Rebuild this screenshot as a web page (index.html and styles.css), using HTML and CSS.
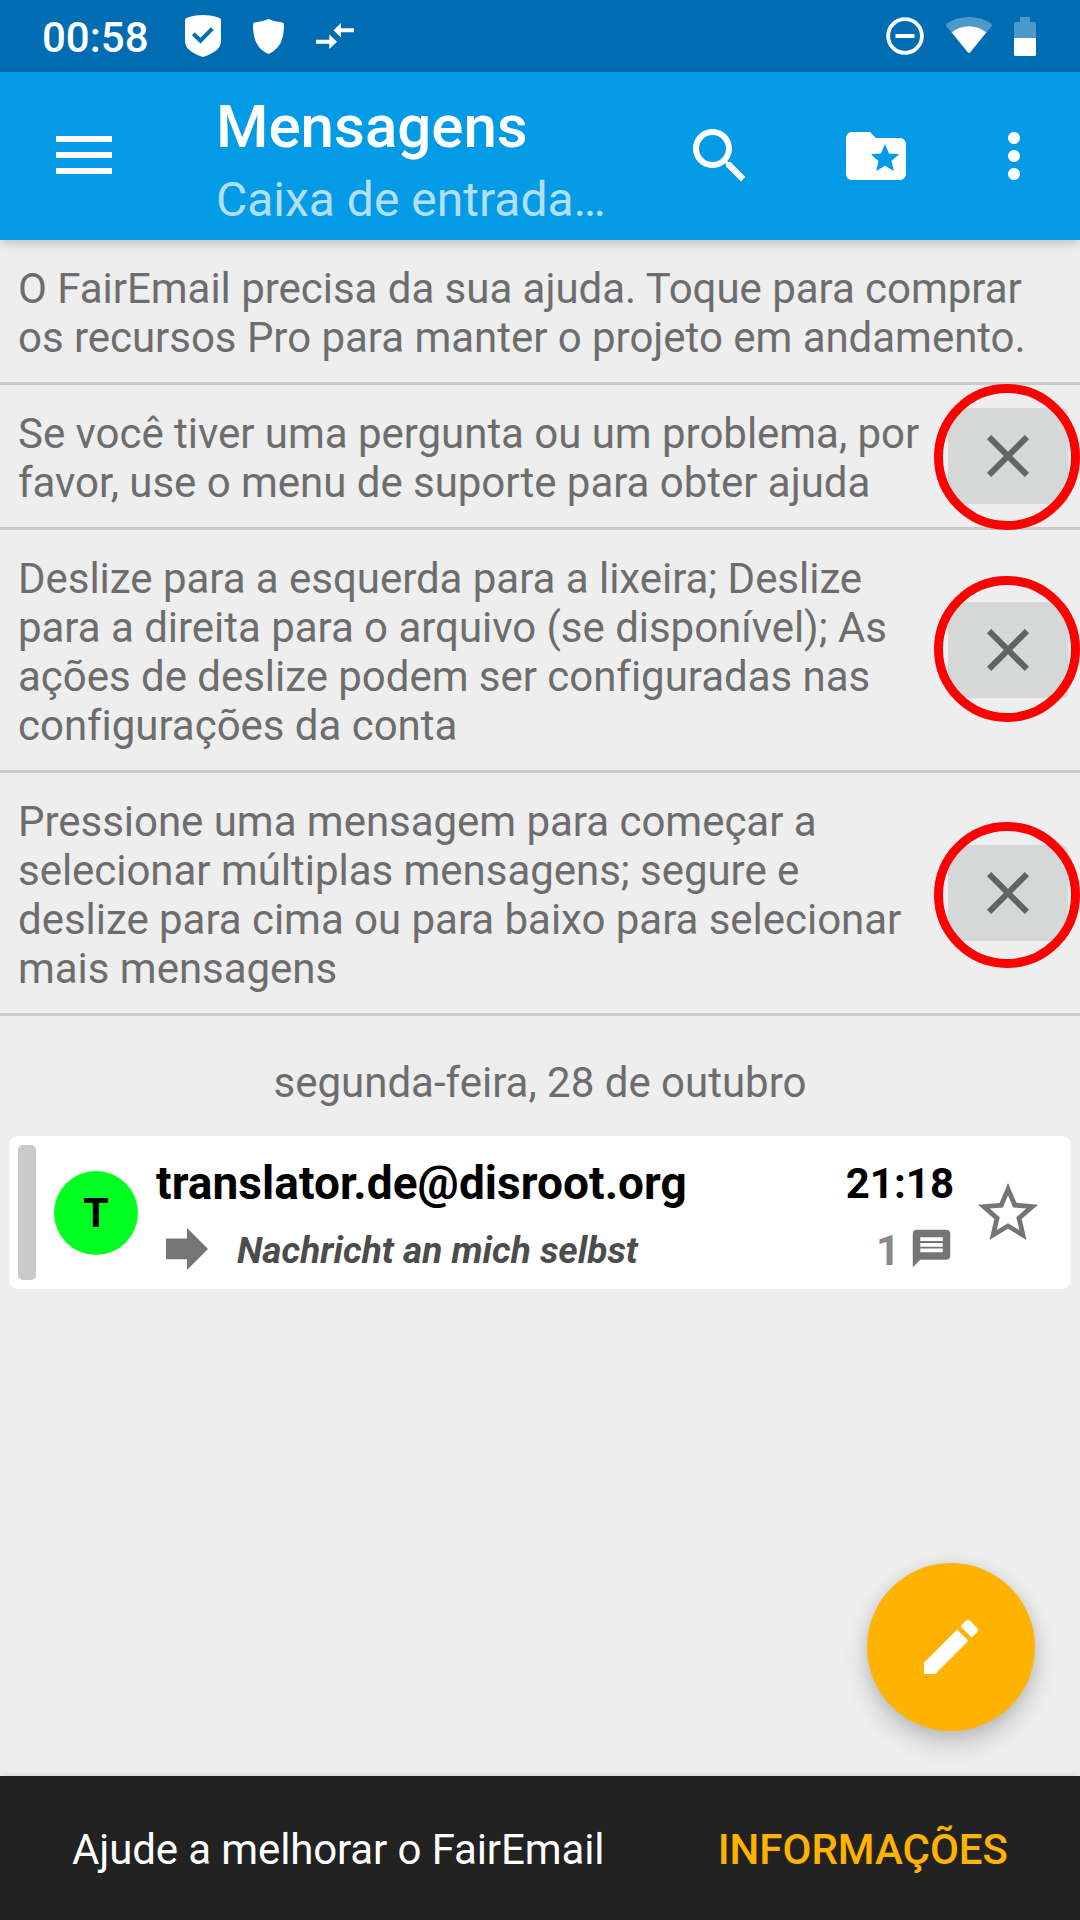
FILE: index.html
```
<!DOCTYPE html>
<html lang="pt">
<head>
<meta charset="utf-8">
<title>Mensagens</title>
<link rel="stylesheet" href="styles.css">
</head>
<body>
<div class="screen">
  <header class="status-bar">
    <span class="clock">00:58</span>
    <svg class="status-shield-check" width="36" height="42" viewBox="0 0 36 42"><path fill="#fff" d="M18 0C12 0 6 1 1.500 3Q0 3.500 0 5V26C0 34 8 38.500 18 42C28 38.500 36 34 36 26V5Q36 3.500 34.500 3C30 1 24 0 18 0Z"/><path fill="none" stroke="#006db3" stroke-width="4" d="M8.300 18.800 15.500 25.700 27.300 13.700"/></svg>
    <svg class="status-shield" width="31" height="35" viewBox="0 0 31 35"><path fill="#fff" d="M15.500 0Q9 3.200 1.500 3.500 0 3.700 0 6C0 20 4 30 15.500 35C27 30 31 20 31 6Q31 3.700 29.500 3.500 22 3.200 15.500 0Z"/></svg>
    <svg class="status-arrows" width="38" height="26" viewBox="0 0 38 26"><path fill="#fff" d="M17.500 7.300 25 0V5.300H38V9.300H25V14.600ZM0 16.800H13.300V11.500L21 18.800 13.300 26V20.800H0Z"/></svg>
    <div class="status-right">
      <svg width="38" height="38" viewBox="0 0 38 38"><circle cx="19" cy="19" r="16.900" fill="none" stroke="#fff" stroke-width="3.800"/><path fill="#fff" d="M9.500 17H28.500V21H9.500Z"/></svg>
      <svg class="wifi" width="46" height="36" viewBox="0 0 46 36"><path fill="#4d99ca" d="M.500 9.500C-.300 8.500 0 7 1.500 6C14-2 32-2 44.500 6C46 7 46.300 8.500 45.500 9.500L40 16H6Z"/><path fill="#fff" d="M5.700 15.500C16 7.300 30 7.300 40.300 15.500L24.500 35Q23 36.800 21.500 35Z"/></svg>
      <svg width="22" height="39" viewBox="0 0 22 39"><path fill="#4d99ca" d="M6 0H16V5H20Q22 5 22 7V21H0V7Q0 5 2 5H6Z"/><path fill="#fff" d="M0 21H22V37.500Q22 39 20.500 39H1.500Q0 39 0 37.500Z"/></svg>
    </div>
  </header>

  <div class="toolbar">
    <svg class="menu" width="56" height="40" viewBox="0 0 56 40"><path fill="#fff" d="M0 0H56V6H0ZM0 16H56V22H0ZM0 32H56V38H0Z"/></svg>
    <div class="titles">
      <h1 class="title">Mensagens</h1>
      <div class="subtitle">Caixa de entrada…</div>
    </div>
    <svg class="search" width="72" height="72" viewBox="0 0 24 24"><path fill="#fff" d="M15.500 14h-.79l-.28-.27C15.410 12.590 16 11.110 16 9.500 16 5.910 13.090 3 9.500 3S3 5.910 3 9.500 5.910 16 9.500 16c1.610 0 3.090-.59 4.230-1.570l.27.28v.79l5 4.990L20.490 19l-4.990-5zm-6 0C7.010 14 5 11.990 5 9.500S7.010 5 9.500 5 14 7.010 14 9.500 11.990 14 9.500 14z"/></svg>
    <svg class="folder" width="72" height="72" viewBox="0 0 24 24"><path fill="#fff" d="M20 6h-8l-2-2H4c-1.100 0-1.990.9-1.990 2L2 18c0 1.100.9 2 2 2h16c1.100 0 2-.9 2-2V8c0-1.100-.9-2-2-2zm-2.060 11L15 15.280 12.060 17l.78-3.330-2.590-2.240 3.410-.29L15 8l1.340 3.140 3.410.29-2.590 2.240.78 3.330z"/></svg>
    <svg class="more" width="72" height="72" viewBox="0 0 24 24"><path fill="#fff" d="M12 8c1.100 0 2-.9 2-2s-.9-2-2-2-2 .9-2 2 .9 2 2 2zm0 2c-1.100 0-2 .9-2 2s.9 2 2 2 2-.9 2-2-.9-2-2-2zm0 6c-1.100 0-2 .9-2 2s.9 2 2 2 2-.9 2-2-.9-2-2-2z"/></svg>
  </div>

  <main class="content">
    <div class="hint"><p>O FairEmail precisa da sua ajuda. Toque para comprar<br>os recursos Pro para manter o projeto em andamento.</p></div>
    <div class="hint">
      <p>Se você tiver uma pergunta ou um problema, por<br>favor, use o menu de suporte para obter ajuda</p>
      <div class="close"><svg width="72" height="72" viewBox="0 0 24 24"><path d="M19 6.410 17.590 5 12 10.590 6.410 5 5 6.410 10.590 12 5 17.590 6.410 19 12 13.410 17.590 19 19 17.590 13.410 12z"/></svg><span class="ring ring-low"></span></div>
    </div>
    <div class="hint">
      <p>Deslize para a esquerda para a lixeira; Deslize<br>para a direita para o arquivo (se disponível); As<br>ações de deslize podem ser configuradas nas<br>configurações da conta</p>
      <div class="close"><svg width="72" height="72" viewBox="0 0 24 24"><path d="M19 6.410 17.590 5 12 10.590 6.410 5 5 6.410 10.590 12 5 17.590 6.410 19 12 13.410 17.590 19 19 17.590 13.410 12z"/></svg><span class="ring ring-high"></span></div>
    </div>
    <div class="hint">
      <p>Pressione uma mensagem para começar a<br>selecionar múltiplas mensagens; segure e<br>deslize para cima ou para baixo para selecionar<br>mais mensagens</p>
      <div class="close"><svg width="72" height="72" viewBox="0 0 24 24"><path d="M19 6.410 17.590 5 12 10.590 6.410 5 5 6.410 10.590 12 5 17.590 6.410 19 12 13.410 17.590 19 19 17.590 13.410 12z"/></svg><span class="ring ring-lower"></span></div>
    </div>

    <div class="date">segunda-feira, 28 de outubro</div>

    <article class="card">
      <div class="stripe"></div>
      <div class="avatar">T</div>
      <div class="message">
        <div class="row-top">
          <span class="sender">translator.de@disroot.org</span>
          <span class="time">21:18</span>
        </div>
        <div class="row-bottom">
          <svg class="arrow" width="42" height="42" viewBox="0 0 42 42"><path fill="#757575" d="M0 10.500H21V0L42 21 21 42V31.300H0Z"/></svg>
          <span class="subject">Nachricht an mich selbst</span>
          <span class="count">1</span>
          <svg class="chat" width="45" height="45" viewBox="0 0 24 24"><path fill="#757575" d="M20 2H4c-1.100 0-1.990.9-1.990 2L2 22l4-4h14c1.100 0 2-.9 2-2V4c0-1.100-.9-2-2-2zm-2 12H6v-2h12v2zm0-3H6V9h12v2zm0-3H6V6h12v2z"/></svg>
        </div>
      </div>
      <svg class="star" width="72" height="72" viewBox="0 0 24 24"><path fill="#757575" d="M22 9.240l-7.190-.62L12 2 9.190 8.630 2 9.240l5.460 4.730L5.820 21 12 17.270 18.180 21l-1.630-7.030L22 9.240zM12 15.400l-3.760 2.270 1-4.280-3.320-2.880 4.380-.38L12 6.100l1.710 4.040 4.380.38-3.320 2.880 1 4.280L12 15.400z"/></svg>
    </article>

    <div class="fab"><svg width="72" height="72" viewBox="0 0 24 24"><path fill="#fff" d="M3 17.250V21h3.750L17.810 9.940l-3.750-3.750L3 17.250zM20.710 7.040c.39-.39.39-1.020 0-1.410l-2.340-2.340c-.39-.39-1.020-.39-1.410 0l-1.830 1.830 3.750 3.750 1.830-1.830z"/></svg></div>
  </main>

  <footer class="snackbar">
    <span class="snack-text">Ajude a melhorar o FairEmail</span>
    <span class="action">INFORMAÇÕES</span>
  </footer>
</div>
</body>
</html>
```
FILE: styles.css
```
* {
  box-sizing: border-box;
}

body, h1, p {
  margin: 0;
}

svg {
  display: block;
  flex: none;
}

.screen {
  display: flex;
  flex-direction: column;
  width: 1080px;
  height: 1920px;
  overflow: hidden;
  background: #eee;
  font: 42px/49px Roboto, sans-serif;
  white-space: nowrap;
}

/* Status bar */
.status-bar {
  display: flex;
  align-items: center;
  height: 72px;
  padding: 0 44px 0 42px;
  background: #006db3;
  color: #fff;
}

.clock {
  width: 143px;
  padding-top: 3px;
  font-weight: 500;
}

.status-shield {
  margin-left: 32px;
}

.status-arrows {
  margin-left: 32px;
}

.status-right {
  display: flex;
  align-items: center;
  gap: 22px;
  margin-left: auto;
}

.wifi {
  margin-bottom: 2px;
}

/* Toolbar */
.toolbar {
  position: relative;
  z-index: 1;
  display: flex;
  align-items: center;
  height: 168px;
  padding: 0 30px 0 56px;
  background: #039be5;
  color: #fff;
  box-shadow: 0 3px 11px rgba(0, 0, 0, .2);
}

.titles {
  width: 468px;
  margin-left: 104px;
  padding-top: 8px;
}

.title {
  font-size: 60px;
  font-weight: 500;
  line-height: 70px;
}

.subtitle {
  padding-top: 10px;
  font-size: 48px;
  line-height: 56px;
  color: rgba(255, 255, 255, .7);
}

.folder {
  margin-left: 84px;
}

.more {
  margin-left: 66px;
}

/* Content */
.content {
  position: relative;
  flex: 1;
}

.hint {
  display: flex;
  align-items: center;
  justify-content: space-between;
  padding: 0 12px 0 18px;
  border-bottom: 3px solid #cacaca;
  color: #6d6d6d;
}

.hint p {
  padding: 24px 0 20px;
  letter-spacing: -.03px;
}

.close {
  position: relative;
  display: flex;
  align-items: center;
  justify-content: center;
  width: 120px;
  height: 96px;
  border-radius: 6px;
  background: #d6d7d7;
  fill: #626463;
}

.ring {
  position: absolute;
  left: -14px;
  width: 146px;
  height: 146px;
  border: 9px solid #f00;
  border-radius: 50%;
}

.ring-low {
  top: -24px;
}

.ring-high {
  top: -26px;
}

.ring-lower {
  top: -23px;
}

.date {
  padding: 42px 0 29px;
  text-align: center;
  color: #6d6d6d;
}

/* Message card */
.card {
  display: flex;
  align-items: center;
  height: 153px;
  margin: 0 9px;
  padding: 9px 27px 9px 9px;
  border-radius: 9px;
  background: #fff;
}

.stripe {
  width: 18px;
  height: 135px;
  border-radius: 5px;
  background: #cacaca;
}

.avatar {
  width: 84px;
  height: 84px;
  margin-left: 18px;
  border-radius: 50%;
  background: #00ff21;
  font-size: 41px;
  font-weight: 700;
  line-height: 85px;
  text-align: center;
}

.message {
  align-self: stretch;
  width: 798px;
  margin-left: 18px;
  padding-top: 11px;
}

.row-top {
  display: flex;
  align-items: flex-start;
  justify-content: space-between;
  height: 54px;
  font-weight: 700;
}

.sender {
  font-size: 46px;
  line-height: 54px;
  letter-spacing: .06px;
}

.time {
  padding-top: 3px;
}

.row-bottom {
  display: flex;
  align-items: center;
  height: 49px;
  margin-top: 16px;
}

.arrow {
  margin: 0 29px 4px 10px;
}

.subject {
  font-size: 37px;
  font-style: italic;
  font-weight: 700;
  line-height: 43px;
  color: #4c4c4c;
}

.count {
  margin-left: auto;
  font-weight: 700;
  color: #8a8a8a;
}

.chat {
  margin: 0 0 4px 9px;
}

.star {
  margin-left: 18px;
}

/* Compose button */
.fab {
  position: absolute;
  right: 45px;
  bottom: 45px;
  display: flex;
  align-items: center;
  justify-content: center;
  width: 168px;
  height: 168px;
  border-radius: 50%;
  background: #ffb300;
  box-shadow: 0 12px 24px rgba(0, 0, 0, .2), 0 0 14px rgba(0, 0, 0, .07);
}

/* Snackbar */
.snackbar {
  position: relative;
  display: flex;
  align-items: center;
  justify-content: space-between;
  height: 144px;
  padding: 2px 72px 0;
  background: #222;
  color: #fff;
  box-shadow: 0 0 8px rgba(0, 0, 0, .12);
}

.snack-text {
  letter-spacing: -.12px;
}

.action {
  font-weight: 500;
  color: #ffb300;
}
```
